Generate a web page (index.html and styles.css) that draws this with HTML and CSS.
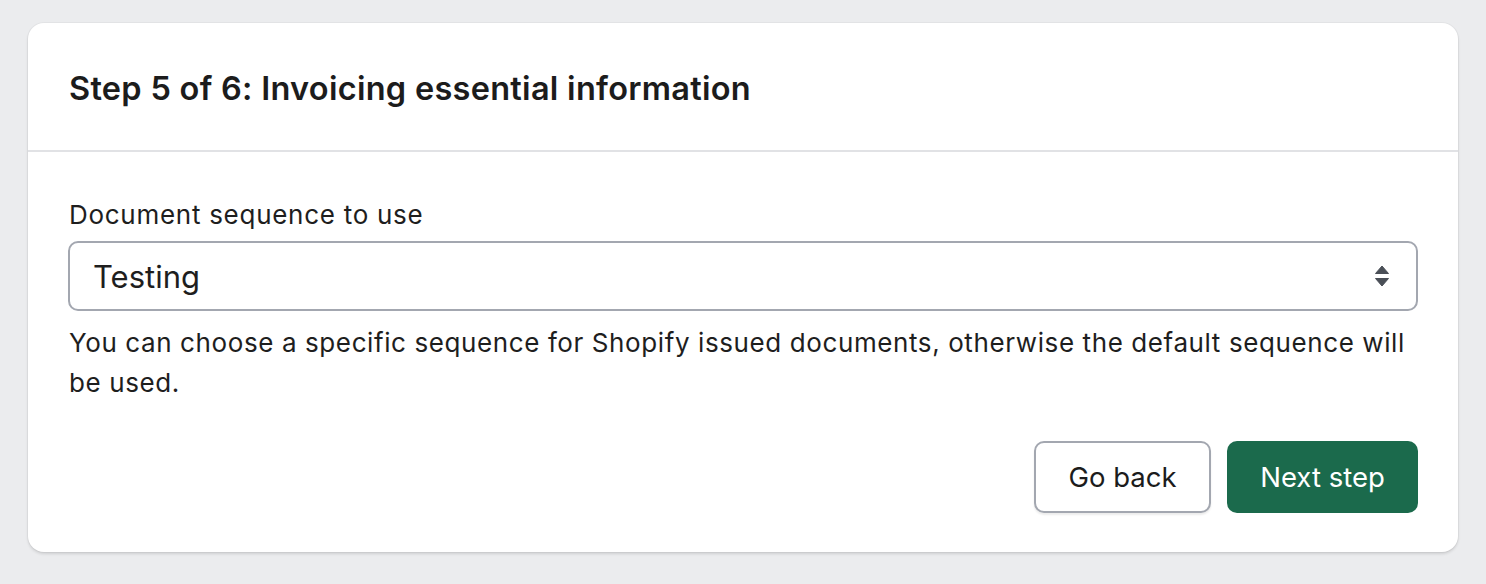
FILE: index.html
```html
<!DOCTYPE html>
<html lang="en">
<head>
<meta charset="utf-8">
<link rel="stylesheet" href="styles.css">
</head>
<body>
<div class="card">
  <div class="card-header">
    <h2 class="title">Step 5 of 6: Invoicing essential information</h2>
  </div>
  <div class="card-body">
    <label class="label" for="seq">Document sequence to use</label>
    <div class="select">
      <span class="select-value">Testing</span>
      <svg class="select-icon" width="14" height="22" viewBox="0 0 14 22" aria-hidden="true">
        <path d="M7 1 L13.5 8.5 H0.5 Z" fill="#4a4f57" stroke="#4a4f57" stroke-width="1" stroke-linejoin="round"/>
        <path d="M7 21 L13.5 13.5 H0.5 Z" fill="#4a4f57" stroke="#4a4f57" stroke-width="1" stroke-linejoin="round"/>
      </svg>
    </div>
    <p class="help">You can choose a specific sequence for Shopify issued documents, otherwise the default sequence will be used.</p>
    <div class="actions">
      <button class="btn btn-secondary">Go back</button>
      <button class="btn btn-primary">Next step</button>
    </div>
  </div>
</div>
</body>
</html>
```
FILE: styles.css
```css
* { box-sizing: border-box; }
html, body { margin: 0; }
body {
  background: #ebecee;
  padding: 23px 28px;
  font-family: Inter, "Noto Sans", sans-serif;
  color: #1e1e1e;
}
.card {
  width: 1430px;
  background: #fff;
  border-radius: 16px;
  box-shadow: 0 2px 3px rgba(0,0,0,0.12), 0 0 0 1px rgba(0,0,0,0.03);
  overflow: hidden;
}
.card-header {
  height: 129px;
  padding: 3px 41px 0;
  display: flex;
  align-items: center;
  border-bottom: 2px solid #e1e2e5;
}
.title {
  margin: 0;
  font-size: 32.5px;
  font-weight: 600;
  letter-spacing: 0.28px;
  color: #1c1c1c;
}
.card-body {
  padding: 43px 40px 39px 40px;
}
.label {
  display: block;
  font-size: 26px;
  letter-spacing: 0.72px;
  line-height: 40px;
  margin-bottom: 6px;
  padding-left: 1px;
}
.select {
  height: 70px;
  border: 2px solid #a3a7b0;
  border-radius: 10px;
  display: flex;
  align-items: center;
  justify-content: space-between;
  padding: 0 27px 0 23px;
}
.select-value {
  font-size: 31px;
}
.select-icon { display: block; }
.help {
  margin: 12px 0 0 1px;
  font-size: 26px;
  letter-spacing: 0.6px;
  line-height: 40px;
}
.actions {
  margin-top: 38px;
  display: flex;
  justify-content: flex-end;
  gap: 16px;
}
.btn {
  height: 72px;
  border-radius: 10px;
  font-family: inherit;
  font-size: 27.5px;
  padding: 0;
  cursor: pointer;
}
.btn-secondary {
  background: #fff;
  color: #1c1c1c;
  border: 2px solid #a3a7b0;
  box-shadow: 0 2px 2px rgba(0,0,0,0.08);
  width: 177px;
}
.btn-primary {
  background: #1b6a4c;
  color: #fff;
  border: none;
  width: 191px;
}
```
